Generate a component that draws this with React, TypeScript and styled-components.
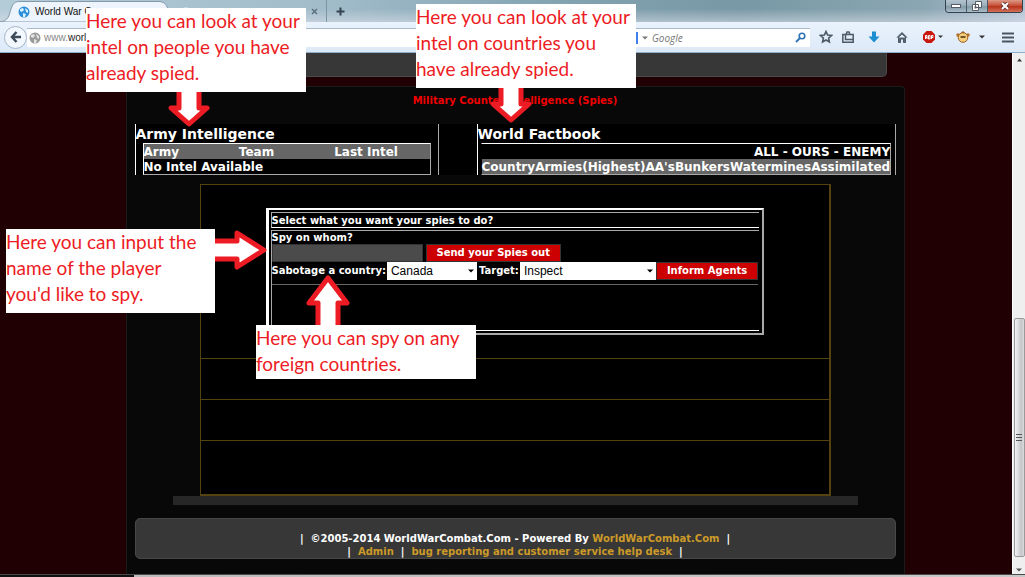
import React from "react";
import styled, { createGlobalStyle, css } from "styled-components";

const GlobalStyle = createGlobalStyle`
  *, *::before, *::after { box-sizing: border-box; }
  body { margin: 0; background: #000; }
  button, input, select { font: inherit; margin: 0; }
`;

const App = styled.div`
  position: relative;
  display: flex;
  flex-direction: column;
  min-height: 100vh;
  overflow: hidden;
  color: #fff;
  font: bold 10px/12px Verdana, "DejaVu Sans", sans-serif;
`;

/* ---------- browser chrome ---------- */

const chromeFont = '"Liberation Sans", Arial, sans-serif';

const TabStrip = styled.header`
  display: flex;
  align-items: stretch;
  height: 22px;
  background: linear-gradient(180deg, rgba(255, 255, 255, 0) 40%, rgba(225, 228, 236, 0.5) 100%),
    linear-gradient(90deg, #b4cbd8 0, #a3bdcb 30%, #83a3b1 55%, #7898a5 72%, #8aa6b2 90%, #b5c4d6 100%);
`;

const TabShape = styled.svg`
  display: block;
  width: 180px;
  height: 22px;
`;

const ActiveTab = styled.div`
  position: relative;
  width: 180px;
  color: #111;
  font: 10px/22px ${chromeFont};
`;

const TabLabel = styled.div`
  position: absolute;
  inset: 0;
  display: flex;
  align-items: center;
  gap: 5px;
  padding: 1px 0 0 18px;
  white-space: nowrap;
`;

const IdleTab = styled.div`
  display: flex;
  align-items: center;
  justify-content: space-between;
  width: 147px;
  padding: 1px 8px 0 0;
  border-right: 1px solid #7d95a3;
`;

const ChromeButton = styled.button`
  display: flex;
  align-items: center;
  justify-content: center;
  padding: 0;
  border: 0;
  background: none;
`;

const NewTabButton = styled(ChromeButton)`
  width: 26px;
  padding-top: 1px;
`;

const WindowButtons = styled.div`
  display: flex;
  height: 13px;
  margin: 0 2px 0 auto;
  border: 1px solid #34424e;
  border-top: 0;
  border-radius: 0 0 4px 4px;
  overflow: hidden;
`;

const WindowButton = styled(ChromeButton)<{ $close?: boolean }>`
  width: ${(p) => (p.$close ? 34 : 21)}px;
  border-right: ${(p) => (p.$close ? "0" : "1px solid #4b5b67")};
  background: ${(p) =>
    p.$close
      ? "linear-gradient(#dd9a88, #c8523a 45%, #b8341c 55%, #d4705a)"
      : "linear-gradient(#b4c5cf, #98acb8 50%, #8299a7 55%, #a9bdc8)"};
`;

const Toolbar = styled.nav`
  display: flex;
  align-items: center;
  height: 31px;
  border-bottom: 1px solid #8fb0cd;
  background: linear-gradient(#eaf3fd, #dce9f8);
`;

const BackButton = styled(ChromeButton)`
  flex: none;
  width: 23px;
  height: 23px;
  margin-left: 4px;
  border: 1px solid #a5b5c6;
  border-radius: 50%;
  background: #f3f8fe;
`;

const Field = styled.label<{ $search?: boolean }>`
  display: flex;
  align-items: center;
  gap: ${(p) => (p.$search ? 4 : 3)}px;
  height: 19px;
  padding: 0 4px 0 2px;
  border-top: 1px solid #a8b9ca;
  background: #fff;
  ${(p) =>
    p.$search
      ? css`
          width: 190px;
          margin-left: 4px;
        `
      : css`
          flex: 1;
        `}
`;

const FieldInput = styled.input`
  flex: 1;
  min-width: 0;
  padding: 0;
  border: 0;
  background: none;
  color: #444;
  font: italic 10px/16px "Open Sans", "Noto Sans", sans-serif;
  &::placeholder { color: #777; opacity: 1; }
`;

const AddressText = styled.span`
  flex: 1;
  color: #888;
  font: 10px/16px ${chromeFont};
  b { color: #222; font-weight: normal; }
`;

const EngineMark = styled.i`
  width: 16px;
  height: 12px;
  background: #3f7fee;
`;

const Tools = styled.div`
  display: grid;
  grid-template-columns: 24px 20px 32px 24px 38px 22px 16px 35px;
  align-items: center;
  justify-items: center;
  margin-left: 4px;
`;

/* ---------- page viewport ---------- */

const Viewport = styled.div`
  display: flex;
  flex: 1;
`;

const Page = styled.main`
  display: flex;
  flex: 1;
  flex-direction: column;
  align-items: center;
  min-width: 0;
  padding-left: 18px;
  background: #200003;
`;

const Masthead = styled.div`
  width: 100%;
  max-width: 744px;
  height: 24px;
  border: 1px solid #4b4b4b;
  border-top: 0;
  border-radius: 0 0 5px 5px;
  background: #373737;
`;

const Frame = styled.div`
  display: flex;
  flex: 1;
  flex-direction: column;
  align-items: center;
  width: 100%;
  max-width: 779px;
  margin-top: 9px;
  padding: 8px 8px 0;
  border: 1px solid #1a1c1c;
  border-bottom: 0;
  border-radius: 4px 4px 0 0;
  background: #080808;
`;

const Title = styled.h1`
  margin: 0;
  color: #f00000;
  font-size: 10px;
  line-height: 12px;
`;

const IntelRow = styled.section`
  display: flex;
  justify-content: space-between;
  width: 100%;
  margin-top: 17px;
  background: #000;
`;

const IntelPanel = styled.div<{ $width: number; $inset: number }>`
  width: ${(p) => p.$width}px;
  height: 51px;
  padding-right: ${(p) => p.$inset}px;
  border-left: 1px solid #fff;
  border-right: 1px solid #a9a9a9;
`;

const IntelHeading = styled.h2`
  margin: 0;
  padding-top: 2px;
  font-size: 14px;
  line-height: 17px;
`;

const IntelTable = styled.table<{ $indent: number; $open?: boolean }>`
  width: calc(100% - ${(p) => p.$indent}px);
  margin-left: ${(p) => p.$indent}px;
  border: 1px solid #a9a9a9;
  border-top-color: #fff;
  border-left-color: ${(p) => (p.$open ? "transparent" : "#fff")};
  border-collapse: separate;
  border-spacing: 0;
  table-layout: ${(p) => (p.$open ? "auto" : "fixed")};
  font-size: 12px;
  line-height: 14px;
  th, td { height: 15px; padding: 1px 0 0; text-align: left; white-space: nowrap; }
`;

const ShadedRow = styled.tr`
  background: #666;
`;

const FilterCell = styled.td`
  && { text-align: right; }
`;

const PlainLink = styled.a`
  color: inherit;
  text-decoration: none;
`;

const Board = styled.section`
  width: 100%;
  max-width: 631px;
  margin-top: 9px;
  border: 1px solid #54420f;
  border-right-width: 2px;
  border-bottom-width: 2px;
  background: #000;
`;

const BoardRow = styled.div<{ $height: number }>`
  display: flow-root;
  min-height: ${(p) => p.$height}px;
  & + & { border-top: 1px solid #54420f; }
`;

const SpyPanel = styled.form`
  max-width: 498px;
  margin: 23px auto 0;
  padding: 2px 3px 2px 2px;
  border: 2px solid #a9a9a9;
  border-top-color: #fff;
  border-left: 3px solid #fff;
`;

const SpyBox = styled.div`
  border: 1px solid #a9a9a9;
  border-right: 0;
  border-bottom-color: #fff;
  & + & { margin-top: 2px; }
`;

const SpyPrompt = styled.h3`
  margin: 0;
  padding-top: 1px;
  font-size: 10px;
  line-height: 13px;
`;

const SpyLine = styled.div`
  display: flex;
  align-items: center;
  height: 18px;
`;

const SpyLabel = styled.label<{ $block?: boolean }>`
  display: ${(p) => (p.$block ? "block" : "inline")};
  line-height: ${(p) => (p.$block ? 13 : 18)}px;
  white-space: nowrap;
`;

const SpyInput = styled.input`
  width: 151px;
  height: 18px;
  margin-right: 3px;
  padding: 0 4px;
  border: 1px solid #333;
  background: #4b4b4b;
  color: #fff;
`;

const RedButton = styled.button`
  height: 18px;
  padding: 0 10px;
  border: 1px solid #333;
  background: #c00;
  color: #fff;
  line-height: 16px;
  white-space: nowrap;
`;

const SelectWrap = styled.span<{ $width: number }>`
  display: flex;
  flex: none;
  align-items: center;
  width: ${(p) => p.$width}px;
  height: 18px;
  margin-left: 1px;
  padding-right: 3px;
  background: #fff;
  & + label { margin-left: 2px; }
`;

const Select = styled.select`
  flex: 1;
  min-width: 0;
  height: 18px;
  padding: 0 4px;
  border: 0;
  appearance: none;
  background: #fff;
  color: #000;
  font: 12px/18px "Liberation Sans", Arial, sans-serif;
`;

const ResultArea = styled.div`
  height: 46px;
  margin: 4px 1px 0 0;
  border-top: 1px solid #666;
`;

const Shelf = styled.div`
  width: 100%;
  max-width: 685px;
  height: 9px;
  background: #272727;
`;

const Footer = styled.footer`
  width: 100%;
  height: 41px;
  margin: 13px 0 15px;
  padding-top: 13px;
  border: 1px solid #484848;
  border-radius: 5px;
  background: #373737;
  line-height: 13px;
`;

const FooterLine = styled.div<{ $gap: number }>`
  display: flex;
  justify-content: center;
  gap: ${(p) => p.$gap}px;
`;

const GoldLink = styled.a`
  color: #cc9a28;
  text-decoration: none;
`;

const ScrollBar = styled.aside`
  display: flex;
  flex-direction: column;
  align-items: center;
  width: 13px;
  padding: 5px 0 2px;
  border-left: 1px solid #fff;
  background: #efefef;
`;

const ScrollThumb = styled.div`
  display: flex;
  align-items: center;
  justify-content: center;
  width: 11px;
  height: 239px;
  margin: auto 0 11px;
  border: 1px solid #999;
  border-radius: 2px;
  background: linear-gradient(90deg, #f4f4f4, #c4c6c9 70%, #dcdcdc);
`;

const DesktopEdge = styled.div`
  height: 3px;
  border-top: 1px solid #4a4a4a;
  background: linear-gradient(90deg, #111 134px, #bbb 134px, #c8c8c8);
`;

/* ---------- callouts ---------- */

type Side = "down" | "right" | "up";

const Callout = styled.div<{ $x: number; $y: number; $side: Side }>`
  position: absolute;
  left: ${(p) => p.$x}px;
  top: ${(p) => p.$y}px;
  display: flex;
  flex-direction: ${(p) => ({ down: "column", right: "row", up: "column-reverse" })[p.$side]};
`;

const Note = styled.p<{ $width: number; $foot: number }>`
  width: ${(p) => p.$width}px;
  margin: 0;
  padding-bottom: ${(p) => p.$foot}px;
  background: #fff;
  color: #ed1c24;
  font: 19px/26px Lato, sans-serif;
  white-space: pre;
`;

const ArrowSvg = styled.svg<{ $shift: number; $side: Side }>`
  display: block;
  flex: none;
  ${(p) => (p.$side === "right" ? "margin-top" : "margin-left")}: ${(p) => p.$shift}px;
`;

const arrows: Record<Side, { w: number; h: number; d: string }> = {
  down: { w: 46, h: 35, d: "M13 -5V16H5L23 32L41 16H33V-5" },
  right: { w: 52, h: 42, d: "M-5 12H22V4L49 21L22 38V30H-5" },
  up: { w: 46, h: 50, d: "M13 56V28H4L23 3L42 28H33V56" },
};

function Arrow({ side, shift }: { side: Side; shift: number }) {
  const a = arrows[side];
  return (
    <ArrowSvg $side={side} $shift={shift} width={a.w} height={a.h} viewBox={`0 0 ${a.w} ${a.h}`} aria-hidden>
      <path d={a.d} fill="#fff" stroke="#ed1c24" strokeWidth="5" strokeLinejoin="round" />
    </ArrowSvg>
  );
}

/* ---------- small drawings ---------- */

const Caret = ({ color = "#000" }: { color?: string }) => (
  <svg width="6" height="4" viewBox="0 0 6 4" aria-hidden>
    <path d="M0 0.5h6L3 3.5z" fill={color} />
  </svg>
);

const Globe = ({ grey }: { grey?: boolean }) => (
  <svg width="12" height="12" viewBox="0 0 12 12" aria-hidden>
    <circle cx="6" cy="6" r="5.5" fill={grey ? "#999" : "#2b8fd9"} />
    <path d="M2 3l3-1 1 2-2 2-2-1zM7 2l3 2v3L8 6zM5 7l3 1-1 3H5z" fill={grey ? "#e2e2e2" : "#d8f0ff"} />
  </svg>
);

function BrowserTabs() {
  return (
    <TabStrip>
      <ActiveTab>
        <TabShape viewBox="0 0 180 22">
          <path d="M0 22C8 21 9 16 11 9C13 3 15 1.500 20 1.500H158C164 1.500 166 4 168 9C170 16 172 21 180 22z" fill="#edf4fc" stroke="#8199a9" />
        </TabShape>
        <TabLabel>
          <Globe />
          World War C
        </TabLabel>
      </ActiveTab>
      <IdleTab>
        <svg width="14" height="14" viewBox="0 0 14 14" aria-hidden>
          <path d="M1 5a6 6 0 0 1 10 0z" fill="#c9e8f5" />
        </svg>
        <ChromeButton aria-label="Close tab">
          <svg width="7" height="7" viewBox="0 0 7 7">
            <path d="M1 1l5 5M6 1L1 6" stroke="#5e7280" strokeWidth="1.500" />
          </svg>
        </ChromeButton>
      </IdleTab>
      <NewTabButton aria-label="New tab">
        <svg width="9" height="9" viewBox="0 0 9 9">
          <path d="M4.500 0.500v8M0.500 4.500h8" stroke="#34444f" strokeWidth="2" />
        </svg>
      </NewTabButton>
      <WindowButtons>
        <WindowButton aria-label="Minimize">
          <svg width="10" height="5" viewBox="0 0 10 5">
            <rect x="0.500" y="0.500" width="9" height="3" fill="#fff" stroke="#555c66" />
          </svg>
        </WindowButton>
        <WindowButton aria-label="Restore">
          <svg width="10" height="10" viewBox="0 0 10 10">
            <path d="M3.500 0.500h6v6h-6zM0.500 3.500h6v6h-6z" fill="#fff" stroke="#555c66" />
            <rect x="2.500" y="5.500" width="2" height="2" fill="#555c66" />
          </svg>
        </WindowButton>
        <WindowButton $close aria-label="Close">
          <svg width="10" height="8" viewBox="0 0 10 8">
            <path d="M2 1l6 6M8 1L2 7" stroke="#6b3a3a" strokeWidth="4" />
            <path d="M2 1l6 6M8 1L2 7" stroke="#fff" strokeWidth="2" />
          </svg>
        </WindowButton>
      </WindowButtons>
    </TabStrip>
  );
}

function BrowserToolbar() {
  return (
    <Toolbar>
      <BackButton aria-label="Back">
        <svg width="12" height="12" viewBox="0 0 12 12">
          <path d="M6.500 1L2 6l4.500 5M2.500 6H11" fill="none" stroke="#3d4a57" strokeWidth="2.500" />
        </svg>
      </BackButton>
      <Field as="div">
        <Globe grey />
        <AddressText>
          www.<b>world</b>
        </AddressText>
      </Field>
      <Field $search>
        <EngineMark />
        <Caret color="#777" />
        <FieldInput placeholder="Google" aria-label="Search" />
        <svg width="11" height="11" viewBox="0 0 11 11" aria-hidden>
          <circle cx="7" cy="4" r="2.800" fill="none" stroke="#3273b5" strokeWidth="1.600" />
          <path d="M5 6L1 10" stroke="#3273b5" strokeWidth="2" />
        </svg>
      </Field>
      <Tools>
        <svg width="14" height="14" viewBox="0 0 14 14" aria-hidden>
          <path d="M7 1.500l1.600 3.600 3.900.4-2.900 2.600.8 3.900L7 10l-3.400 2 .8-3.900L1.500 5.500l3.900-.4z" fill="none" stroke="#4c5a66" strokeWidth="1.600" />
        </svg>
        <svg width="12" height="12" viewBox="0 0 12 12" aria-hidden>
          <path d="M0.800 3.500H11.200V11.200H0.800zM3.500 3.500V8.500H11M4 3.500L5 1H7L8 3.500" fill="none" stroke="#4c5a66" strokeWidth="1.500" />
        </svg>
        <svg width="12" height="12" viewBox="0 0 12 12" aria-hidden>
          <path d="M4 0.500h4v5h3.500L6 11.500L0.500 5.500H4z" fill="#1b8fd0" />
        </svg>
        <svg width="12" height="12" viewBox="0 0 12 12" aria-hidden>
          <path d="M1 6.500L6 1.500l5 5M2.500 6V11.500H4.500V8h3v3.500h2V6L6 3z" fill="#5a6672" stroke="#4c5a66" strokeWidth="1" />
        </svg>
        <svg width="20" height="12" viewBox="0 0 20 12" aria-hidden>
          <path d="M3.500 0h5L12 3.500v5L8.500 12h-5L0 8.500v-5z" fill="#c8170d" />
          <path d="M2.500 8V4.500h1.500V8M2.500 6.500H4M5.500 4.500V8H7V4.500zM8.500 8V4.500H10v2H8.500" fill="none" stroke="#fff" />
          <path d="M15 4.500h5L17.500 7z" fill="#333" />
        </svg>
        <svg width="14" height="12" viewBox="0 0 14 12" aria-hidden>
          <circle cx="2" cy="4" r="1.800" fill="#b9732a" />
          <circle cx="12" cy="4" r="1.800" fill="#b9732a" />
          <path d="M5 2L7 0L9 2" fill="#8a4c15" />
          <circle cx="7" cy="6.500" r="4.800" fill="#f6cf7c" stroke="#a05e1c" />
          <path d="M4.500 6h5" stroke="#4a2a0c" strokeWidth="1.500" />
        </svg>
        <Caret color="#333" />
        <svg width="12" height="11" viewBox="0 0 12 11" aria-hidden>
          <path d="M0 1.500h12M0 5.500h12M0 9.500h12" stroke="#4a5662" strokeWidth="2" />
        </svg>
      </Tools>
    </Toolbar>
  );
}

const factColumns = ["Country", "Armies(Highest)", "AA's", "Bunkers", "Watermines", "Assimilated"];

function Intelligence() {
  return (
    <IntelRow>
      <IntelPanel $width={304} $inset={7}>
        <IntelHeading>Army Intelligence</IntelHeading>
        <IntelTable $indent={7}>
          <thead>
            <ShadedRow>
              <th>Army</th>
              <th>Team</th>
              <th>Last Intel</th>
            </ShadedRow>
          </thead>
          <tbody>
            <tr>
              <td colSpan={3}>No Intel Available</td>
            </tr>
          </tbody>
        </IntelTable>
      </IntelPanel>
      <IntelPanel $width={419} $inset={4}>
        <IntelHeading>World Factbook</IntelHeading>
        <IntelTable $indent={3} $open>
          <tbody>
            <tr>
              <FilterCell colSpan={6}>
                <PlainLink href="#all">ALL</PlainLink> - <PlainLink href="#ours">OURS</PlainLink> -{" "}
                <PlainLink href="#enemy">ENEMY</PlainLink>
              </FilterCell>
            </tr>
            <ShadedRow>
              {factColumns.map((name) => (
                <th key={name}>{name}</th>
              ))}
            </ShadedRow>
          </tbody>
        </IntelTable>
      </IntelPanel>
    </IntelRow>
  );
}

function SpyForm() {
  return (
    <SpyPanel onSubmit={(e) => e.preventDefault()}>
      <SpyBox>
        <SpyPrompt>Select what you want your spies to do?</SpyPrompt>
      </SpyBox>
      <SpyBox>
        <SpyLabel $block htmlFor="player">
          Spy on whom?
        </SpyLabel>
        <SpyLine>
          <SpyInput id="player" />
          <RedButton type="submit">Send your Spies out</RedButton>
        </SpyLine>
        <SpyLine>
          <SpyLabel htmlFor="country">Sabotage a country:</SpyLabel>
          <SelectWrap $width={90}>
            <Select id="country">
              <option>Canada</option>
            </Select>
            <Caret />
          </SelectWrap>
          <SpyLabel htmlFor="target">Target:</SpyLabel>
          <SelectWrap $width={136}>
            <Select id="target">
              <option>Inspect</option>
            </Select>
            <Caret />
          </SelectWrap>
          <RedButton type="submit">Inform Agents</RedButton>
        </SpyLine>
        <ResultArea />
      </SpyBox>
    </SpyPanel>
  );
}

export default function WarCombatGuide() {
  return (
    <App>
      <GlobalStyle />
      <BrowserTabs />
      <BrowserToolbar />
      <Viewport>
        <Page>
          <Masthead />
          <Frame>
            <Title>Military Counter Intelligence (Spies)</Title>
            <Intelligence />
            <Board>
              <BoardRow $height={173}>
                <SpyForm />
              </BoardRow>
              <BoardRow $height={41} />
              <BoardRow $height={41} />
              <BoardRow $height={54} />
            </Board>
            <Shelf />
            <Footer>
              <FooterLine $gap={7}>
                <span>|</span>
                <span>
                  ©2005-2014 WorldWarCombat.Com - Powered By <GoldLink href="#home">WorldWarCombat.Com</GoldLink>
                </span>
                <span>|</span>
              </FooterLine>
              <FooterLine $gap={7}>
                <span>|</span>
                <GoldLink href="#admin">Admin</GoldLink>
                <span>|</span>
                <GoldLink href="#help">bug reporting and customer service help desk</GoldLink>
                <span>|</span>
              </FooterLine>
            </Footer>
          </Frame>
        </Page>
        <ScrollBar>
          <svg width="5" height="4" viewBox="0 0 5 4" aria-hidden>
            <path d="M0 3.500h5L2.500 0.500z" fill="#333" />
          </svg>
          <ScrollThumb>
            <svg width="6" height="7" viewBox="0 0 6 7" aria-hidden>
              <path d="M0 0.500h6M0 3.500h6M0 6.500h6" stroke="#555" />
            </svg>
          </ScrollThumb>
          <Caret color="#555" />
        </ScrollBar>
      </Viewport>
      <DesktopEdge />

      <Callout $x={86} $y={8} $side="down">
        <Note $width={220} $foot={6}>{"Here you can look at your\nintel on people you have\nalready spied."}</Note>
        <Arrow side="down" shift={80} />
      </Callout>
      <Callout $x={416} $y={4} $side="down">
        <Note $width={220} $foot={6}>{"Here you can look at your\nintel on countries you\nhave already spied."}</Note>
        <Arrow side="down" shift={72} />
      </Callout>
      <Callout $x={6} $y={229} $side="right">
        <Note $width={209} $foot={6}>{"Here you can input the\nname of the player\nyou'd like to spy."}</Note>
        <Arrow side="right" shift={0} />
      </Callout>
      <Callout $x={256} $y={275} $side="up">
        <Note $width={220} $foot={2}>{"Here you can spy on any\nforeign countries."}</Note>
        <Arrow side="up" shift={49} />
      </Callout>
    </App>
  );
}
